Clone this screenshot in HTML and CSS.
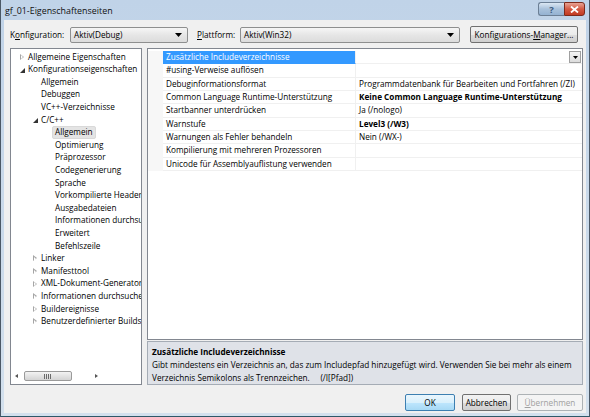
FILE: index.html
```html
<!DOCTYPE html>
<html lang="de">
<head>
<meta charset="utf-8">
<title>gf_01-Eigenschaftenseiten</title>
<link rel="stylesheet" href="styles.css">
</head>
<body>
<div class="window">
  <div class="titlebar">
    <span class="title">gf_01-Eigenschaftenseiten</span>
    <div class="caption-btns">
      <span class="cbtn help">?</span>
      <span class="cbtn close"><svg width="9" height="7" viewBox="0 0 9 7"><path d="M1 0.5 L8 6.5 M8 0.5 L1 6.5" stroke="#fff" stroke-width="1.8"/></svg></span>
    </div>
  </div>
  <div class="client">
    <div class="toolbar">
      <span class="lbl lbl-konf">K<u>o</u>nfiguration:</span>
      <div class="combo combo-konf"><span class="combo-text">Aktiv(Debug)</span><svg class="arrow" width="7" height="4" viewBox="0 0 7 4"><path d="M0 0 H7 L3.5 4 Z" fill="#000"/></svg></div>
      <span class="lbl lbl-platt"><u>P</u>lattform:</span>
      <div class="combo combo-platt"><span class="combo-text">Aktiv(Win32)</span><svg class="arrow" width="7" height="4" viewBox="0 0 7 4"><path d="M0 0 H7 L3.5 4 Z" fill="#000"/></svg></div>
      <span class="btn btn-manager">Konfigurations-<u>M</u>anager...</span>
    </div>
    <div class="main">
      <div class="tree">
        <div class="tree-items">
          <div class="ti l0"><span class="tg closed"></span>Allgemeine Eigenschaften</div>
          <div class="ti l0"><span class="tg open"></span>Konfigurationseigenschaften</div>
          <div class="ti l1"><span class="tg"></span>Allgemein</div>
          <div class="ti l1"><span class="tg"></span>Debuggen</div>
          <div class="ti l1"><span class="tg"></span>VC++-Verzeichnisse</div>
          <div class="ti l1"><span class="tg open"></span>C/C++</div>
          <div class="ti l2"><span class="tg"></span><span class="sel">Allgemein</span></div>
          <div class="ti l2"><span class="tg"></span>Optimierung</div>
          <div class="ti l2"><span class="tg"></span>Präprozessor</div>
          <div class="ti l2"><span class="tg"></span>Codegenerierung</div>
          <div class="ti l2"><span class="tg"></span>Sprache</div>
          <div class="ti l2"><span class="tg"></span>Vorkompilierte Header</div>
          <div class="ti l2"><span class="tg"></span>Ausgabedateien</div>
          <div class="ti l2"><span class="tg"></span>Informationen durchsuchen</div>
          <div class="ti l2"><span class="tg"></span>Erweitert</div>
          <div class="ti l2"><span class="tg"></span>Befehlszeile</div>
          <div class="ti l1"><span class="tg closed"></span>Linker</div>
          <div class="ti l1"><span class="tg closed"></span>Manifesttool</div>
          <div class="ti l1"><span class="tg closed"></span>XML-Dokument-Generator</div>
          <div class="ti l1"><span class="tg closed"></span>Informationen durchsuchen</div>
          <div class="ti l1"><span class="tg closed"></span>Buildereignisse</div>
          <div class="ti l1"><span class="tg closed"></span>Benutzerdefinierter Buildschritt</div>
        </div>
        <div class="hscroll">
          <span class="sarrow left"></span>
          <div class="track"><div class="thumb"><span class="grip"></span></div></div>
          <span class="sarrow right"></span>
        </div>
      </div>
      <div class="right">
        <div class="grid">
          <div class="row selected"><div class="gut"></div><div class="name">Zusätzliche Includeverzeichnisse</div><div class="val"><span></span><span class="ddbtn"><svg width="5" height="3" viewBox="0 0 5 3"><path d="M0 0 H5 L2.5 3 Z" fill="#000"/></svg></span></div></div>
          <div class="row"><div class="gut"></div><div class="name">#using-Verweise auflösen</div><div class="val"></div></div>
          <div class="row"><div class="gut"></div><div class="name">Debuginformationsformat</div><div class="val">Programmdatenbank für Bearbeiten und Fortfahren (/ZI)</div></div>
          <div class="row"><div class="gut"></div><div class="name">Common Language Runtime-Unterstützung</div><div class="val bold">Keine Common Language Runtime-Unterstützung</div></div>
          <div class="row"><div class="gut"></div><div class="name">Startbanner unterdrücken</div><div class="val">Ja (/nologo)</div></div>
          <div class="row"><div class="gut"></div><div class="name">Warnstufe</div><div class="val bold">Level3 (/W3)</div></div>
          <div class="row"><div class="gut"></div><div class="name">Warnungen als Fehler behandeln</div><div class="val">Nein (/WX-)</div></div>
          <div class="row"><div class="gut"></div><div class="name">Kompilierung mit mehreren Prozessoren</div><div class="val"></div></div>
          <div class="row"><div class="gut"></div><div class="name">Unicode für Assemblyauflistung verwenden</div><div class="val"></div></div>
        </div>
        <div class="desc">
          <div class="desc-title">Zusätzliche Includeverzeichnisse</div>
          <div class="desc-text">Gibt mindestens ein Verzeichnis an, das zum Includepfad hinzugefügt wird. Verwenden Sie bei mehr als einem Verzeichnis Semikolons als Trennzeichen.&nbsp;&nbsp;&nbsp;&nbsp; (/I[Pfad])</div>
        </div>
      </div>
    </div>
    <div class="buttons">
      <span class="btn btn-ok">OK</span>
      <span class="btn btn-cancel">Abbrechen</span>
      <span class="btn btn-apply"><u>Ü</u>bernehmen</span>
    </div>
  </div>
</div>
</body>
</html>
```

FILE: styles.css
```css
* { box-sizing: border-box; }
html, body { margin: 0; padding: 0; }
body {
  width: 590px;
  height: 417px;
  overflow: hidden;
  font-family: "Open Sans", "Noto Sans", sans-serif;
  font-size: 8.2px;
  color: #000;
  background: #fff;
}
u { text-decoration: underline; text-underline-offset: 1px; }

.window {
  width: 590px;
  height: 417px;
  display: flex;
  flex-direction: column;
  background: linear-gradient(#c0d3e8, #d3e0ed);
  border-left: 1px solid #4b5866;
  border-right: 1px solid #4b5866;
  border-bottom: 1px solid #2f5868;
  padding: 0 3px 3px 3px;
  overflow: hidden;
}

.titlebar {
  height: 20px;
  display: flex;
  align-items: flex-start;
  justify-content: space-between;
  flex-shrink: 0;
}
.title {
  padding-left: 1px;
  margin-top: 4px;
  font-size: 8.9px;
  color: #111;
}
.caption-btns { display: flex; margin-top: 2px; margin-right: 1px; }
.cbtn {
  height: 14px;
  display: flex;
  align-items: center;
  justify-content: center;
  border: 1px solid #6c7f95;
}
.help {
  width: 26px;
  background: linear-gradient(#dbe7f3, #a9c1db 50%, #95b2d2);
  color: #3d5c80;
  font-weight: bold;
  font-size: 9.5px;
  border-radius: 3px 0 0 3px;
  border-right: none;
}
.close {
  width: 21px;
  background: linear-gradient(#e8a394, #d45a44 50%, #c23b22);
  border-color: #7d2a1c;
  border-radius: 0 3px 3px 0;
}

.client {
  flex: 1;
  min-height: 0;
  background: #f0f0f0;
  padding: 6px 0 3px 6px;
  display: flex;
  flex-direction: column;
}

.toolbar {
  height: 17px;
  display: flex;
  align-items: center;
  flex-shrink: 0;
}
.lbl { white-space: nowrap; }
.lbl-konf { width: 60px; flex-shrink: 0; }
.lbl-platt { width: 43px; flex-shrink: 0; }
.combo {
  height: 16px;
  border: 1px solid #8e8f8f;
  border-radius: 2px;
  background: linear-gradient(#f6f6f6, #e6e6e6 50%, #dcdcdc);
  display: flex;
  align-items: center;
  justify-content: space-between;
  padding: 0 5px 0 3px;
  flex-shrink: 0;
}
.combo-konf { width: 118px; margin-right: 9px; }
.combo-platt { width: 220px; margin-right: 10px; }
.btn {
  height: 17px;
  border: 1px solid #707070;
  border-radius: 2px;
  background: linear-gradient(#f2f2f2, #ebebeb 50%, #dddddd 51%, #cfcfcf);
  display: flex;
  align-items: center;
  justify-content: center;
  white-space: nowrap;
  flex-shrink: 0;
}
.btn-manager { width: 108px; }

.main {
  margin-top: 5px;
  height: 337px;
  display: flex;
  flex-shrink: 0;
  padding-right: 3px;
}
.tree {
  width: 132px;
  flex-shrink: 0;
  border: 1px solid #828790;
  background: #fff;
  display: flex;
  flex-direction: column;
  margin-right: 5px;
}
.tree-items {
  flex: 1;
  overflow: hidden;
  padding-top: 1.7px;
}
.ti {
  height: 12.6px;
  line-height: 12.6px;
  white-space: nowrap;
  display: flex;
  align-items: center;
}
.ti.l0 { padding-left: 6px; }
.ti.l1 { padding-left: 19px; }
.ti.l2 { padding-left: 33px; }
.tg {
  width: 11px;
  height: 12px;
  flex-shrink: 0;
  position: relative;
}
.tg.closed::before {
  content: "";
  position: absolute;
  left: 3px; top: 3px;
  width: 0; height: 0;
  border-left: 4px solid #a6a6a6;
  border-top: 3.5px solid transparent;
  border-bottom: 3.5px solid transparent;
}
.tg.closed::after {
  content: "";
  position: absolute;
  left: 4px; top: 4.5px;
  width: 0; height: 0;
  border-left: 2px solid #fff;
  border-top: 2px solid transparent;
  border-bottom: 2px solid transparent;
}
.tg.open::before {
  content: "";
  position: absolute;
  left: 3px; top: 4px;
  width: 0; height: 0;
  border-bottom: 5px solid #333;
  border-left: 5px solid transparent;
}
.sel {
  background: #e4e4e4;
  border: 1px solid #d9d9d9;
  border-radius: 2px;
  padding: 0 2px;
  margin-left: -3px;
  line-height: 10.6px;
}

.hscroll {
  height: 14px;
  display: flex;
  align-items: center;
  padding: 0 2px 2px 2px;
  flex-shrink: 0;
}
.sarrow { width: 8px; height: 8px; position: relative; flex-shrink: 0; }
.sarrow.left::before {
  content: ""; position: absolute; left: 2px; top: 1.5px;
  border-right: 3px solid #555; border-top: 2.5px solid transparent; border-bottom: 2.5px solid transparent;
}
.sarrow.right::before {
  content: ""; position: absolute; left: 3px; top: 1.5px;
  border-left: 3px solid #555; border-top: 2.5px solid transparent; border-bottom: 2.5px solid transparent;
}
.track { flex: 1; height: 10px; padding-left: 3px; padding-right: 20px; }
.thumb {
  height: 10px;
  border: 1px solid #9a9a9a;
  border-radius: 2px;
  background: linear-gradient(#f3f3f3, #e3e3e3 50%, #d4d4d4);
  display: flex;
  align-items: center;
  justify-content: center;
}
.grip {
  width: 7px; height: 5px;
  background: repeating-linear-gradient(90deg, #6b6b6b 0 1px, transparent 1px 2px);
}

.right {
  flex: 1;
  min-width: 0;
  display: flex;
  flex-direction: column;
}
.grid {
  height: 293px;
  border: 1px solid #828790;
  background: #fff;
  padding-top: 2px;
  margin-bottom: 1px;
  overflow: hidden;
}
.row {
  height: 13.33px;
  display: flex;
}
.gut { width: 15px; background: #f7f7f7; flex-shrink: 0; }
.name {
  width: 193px;
  flex-shrink: 0;
  padding-left: 3px;
  line-height: 12.33px;
  border-bottom: 1px solid #f0f0f0;
  border-right: 1px solid #f0f0f0;
  white-space: nowrap;
  overflow: hidden;
}
.val {
  flex: 1;
  min-width: 0;
  padding-left: 3px;
  line-height: 12.33px;
  border-bottom: 1px solid #f0f0f0;
  white-space: nowrap;
  overflow: hidden;
  display: flex;
  justify-content: space-between;
}
.val.bold { font-weight: bold; }
.row.selected .name { background: #3399ff; color: #fff; border-bottom-color: #3399ff; }
.ddbtn {
  width: 12px;
  height: 12px;
  margin-right: 1px;
  border: 1px solid #a0a0a0;
  background: linear-gradient(#f4f4f4, #dcdcdc);
  display: flex;
  align-items: center;
  justify-content: center;
}

.desc {
  flex: 1;
  background: #dfe2e8;
  border: 1px solid #a5acb5;
  padding: 3px 4px 0 4px;
  line-height: 13px;
}
.desc-title { font-weight: bold; }

.buttons {
  margin-top: 9px;
  height: 16px;
  display: flex;
  justify-content: flex-end;
  padding-right: 3px;
  flex-shrink: 0;
}
.buttons .btn { height: 17px; }
.btn-ok { width: 50px; margin-right: 7px; border-color: #3c7fb1; background: linear-gradient(#eaf6fd, #d9f0fc 50%, #bee6fd 51%, #a7d9f5); }
.btn-cancel { width: 49px; margin-right: 6px; }
.btn-apply { width: 66px; color: #a0a0a0; border-color: #adb2b5; background: #f4f4f4; }
```
